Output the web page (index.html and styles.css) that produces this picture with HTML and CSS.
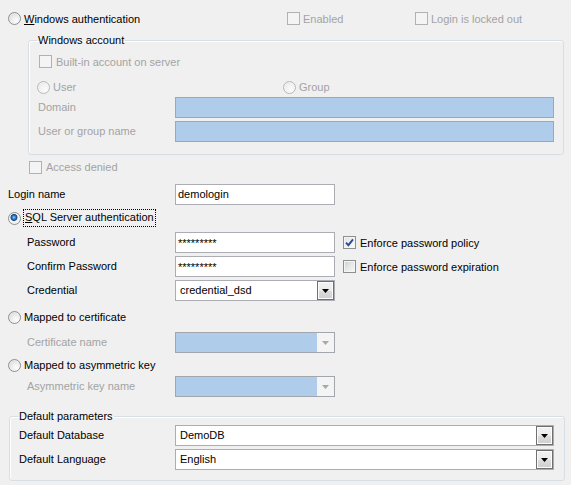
FILE: index.html
```html
<!DOCTYPE html>
<html lang="en">
<head>
<meta charset="utf-8">
<title>Login properties</title>
<link rel="stylesheet" href="styles.css">
</head>
<body>
<div class="page">
  <div class="top-row">
    <label class="opt"><span class="radio"></span><span><u>W</u>indows authentication</span></label>
    <label class="opt dis"><span class="cb dis"></span><span>Enabled</span></label>
    <label class="opt dis"><span class="cb dis"></span><span>Login is locked out</span></label>
  </div>

  <fieldset class="group winacc">
    <legend>Windows account</legend>
    <div class="builtin"><label class="opt dis cbopt"><span class="cb dis"></span><span>Built-in account on server</span></label></div>
    <div class="usergroup">
      <label class="opt dis"><span class="radio dis"></span><span>User</span></label>
      <label class="opt dis"><span class="radio dis"></span><span>Group</span></label>
    </div>
    <div class="frow first"><span class="lbl dis">Domain</span><span class="field blue"></span></div>
    <div class="frow"><span class="lbl dis">User or group name</span><span class="field blue"></span></div>
  </fieldset>

  <div class="access"><label class="opt dis cbopt"><span class="cb dis"></span><span>Access denied</span></label></div>

  <div class="frow login"><span class="lbl">Login name</span><span class="field"><span class="val">demologin</span></span></div>

  <div class="sqlrow">
    <label class="opt"><span class="radio on"></span><span class="focus"><u>S</u>QL Server authentication</span></label>
  </div>

  <div class="frow pw"><span class="lbl ind">Password</span><span class="field pwd">*********</span>
    <label class="opt cbopt check"><span class="cb on"><svg width="9" height="9" viewBox="0 0 9 9"><path d="M1 4.6 L3.4 7.2 L8 1.4" fill="none" stroke="#2a4b9b" stroke-width="1.9"/></svg></span><span>Enforce password policy</span></label>
  </div>
  <div class="frow"><span class="lbl ind">Confirm Password</span><span class="field pwd">*********</span>
    <label class="opt cbopt check"><span class="cb"></span><span>Enforce password expiration</span></label>
  </div>
  <div class="frow"><span class="lbl ind">Credential</span>
    <span class="field combo"><span class="val">credential_dsd</span><span class="btn"><svg width="7" height="4" viewBox="0 0 7 4"><path d="M0 0H7L3.5 4Z" fill="#000"/></svg></span></span>
  </div>

  <div class="maprow cert"><label class="opt"><span class="radio"></span><span>Mapped to certificate</span></label></div>
  <div class="frow sub"><span class="lbl ind dis">Certificate name</span>
    <span class="field combo blue"><span class="val"></span><span class="btn dis"><svg width="7" height="4" viewBox="0 0 7 4"><path d="M0 0H7L3.5 4Z" fill="#a8a8a8"/></svg></span></span>
  </div>
  <div class="maprow asym"><label class="opt"><span class="radio"></span><span>Mapped to asymmetric key</span></label></div>
  <div class="frow"><span class="lbl ind dis">Asymmetric key name</span>
    <span class="field combo blue"><span class="val"></span><span class="btn dis"><svg width="7" height="4" viewBox="0 0 7 4"><path d="M0 0H7L3.5 4Z" fill="#a8a8a8"/></svg></span></span>
  </div>

  <fieldset class="group params">
    <legend>Default parameters</legend>
    <div class="frow first"><span class="lbl">Default Database</span>
      <span class="field combo"><span class="val">DemoDB</span><span class="btn"><svg width="7" height="4" viewBox="0 0 7 4"><path d="M0 0H7L3.5 4Z" fill="#000"/></svg></span></span>
    </div>
    <div class="frow"><span class="lbl">Default Language</span>
      <span class="field combo"><span class="val">English</span><span class="btn"><svg width="7" height="4" viewBox="0 0 7 4"><path d="M0 0H7L3.5 4Z" fill="#000"/></svg></span></span>
    </div>
  </fieldset>
</div>
</body>
</html>
```

FILE: styles.css
```css
* { box-sizing: border-box; }
html, body { margin: 0; padding: 0; }
body {
  background: #f0f0f0;
  font: 11px/14px "Liberation Sans", Arial, sans-serif;
  color: #000;
  width: 571px;
  height: 485px;
  overflow: hidden;
}
.page { padding-left: 8px; }

u { text-decoration: underline; text-underline-offset: 1px; }

.opt { display: flex; align-items: center; gap: 3px; white-space: nowrap; }
.opt.cbopt { gap: 4px; }
.dis { color: #a3a3a3; }

/* radio buttons */
.radio {
  flex: none;
  width: 13px; height: 13px;
  border-radius: 50%;
  border: 1px solid #8e8f8f;
  background: radial-gradient(circle at 65% 70%, #fdfdfd 0, #ececec 45%, #cfd0d1 100%);
  box-shadow: inset 0 0 0 1px rgba(255,255,255,0.35);
}
.radio.dis {
  border-color: #b8b8b8;
  background: radial-gradient(circle at 65% 70%, #fbfbfb 0, #f1f1f1 50%, #e2e2e2 100%);
}
.radio.on {
  background: radial-gradient(circle at 45% 40%, #b7e2ff 0, #3d8ed6 1.3px, #1a5aa0 2.6px, #123f78 3.1px, #dfe6ee 3.8px, #f3f3f3 4.6px, #e5e5e5 100%);
}

/* checkboxes */
.cb {
  flex: none;
  width: 13px; height: 13px;
  border: 1px solid #8e8f8f;
  background: linear-gradient(135deg, #cbcfd5 0, #e8e9ea 55%, #f7f7f7 100%);
  box-shadow: inset 0 0 0 1px #f4f4f4;
  display: flex; align-items: center; justify-content: center;
}
.cb.dis {
  border-color: #b1b1b1;
  background: #f4f4f4;
  box-shadow: none;
}
.cb.on {
  background: linear-gradient(135deg, #dfe3e8 0, #f1f2f3 60%, #fbfbfb 100%);
}
.cb svg { display: block; }

/* top row */
.top-row {
  margin-top: 6px;
  height: 25px;
  display: grid;
  grid-template-columns: 279px 128px 1fr;
  align-items: center;
}

/* group boxes */
.group {
  margin: 0;
  padding: 0 0 0 9px;
  border: 1px solid #d5dfe5;
  border-radius: 3px;
  min-inline-size: 0;
  box-shadow: inset 1px 1px 0 #fff;
}
.group legend {
  padding: 0 1px;
  margin-left: -1px;
  line-height: 14px;
  height: 14px;
}
.winacc {
  margin: 2px 0 0 20px;
  width: 536px;
  padding-bottom: 12px;
}
.params {
  margin: 12px 0 0 1px;
  width: 556px;
  padding-bottom: 10px;
}

.builtin { margin-top: 7px; height: 15px; display: flex; align-items: center; padding-left: 1px; }
.usergroup {
  margin-top: 10px; height: 16px;
  display: grid; grid-template-columns: 246px 1fr;
  align-items: center;
  margin-left: -1px;
}

/* form rows */
.frow {
  display: grid;
  grid-template-columns: 167px 160px auto;
  align-items: center;
  height: 21px;
  margin-top: 3px;
}
.winacc .frow { grid-template-columns: 137px 379px; }
.winacc .frow.first { margin-top: 2px; }
.params .frow { grid-template-columns: 156px 379px; }
.params .frow.first { margin-top: 2px; }

.lbl { white-space: nowrap; padding-bottom: 2px; }
.lbl.ind { padding-left: 19px; }

.field {
  height: 21px;
  border: 1px solid #abadb3;
  background: #fff;
  padding: 0 2px;
  display: flex;
  align-items: center;
  white-space: nowrap;
}
.field .val { padding-bottom: 1px; }
.field.blue { background: #afcdea; border-color: #a3a6ab; }

.combo { padding: 0 0 0 4px; justify-content: space-between; }
.combo .val { flex: 1; }
.combo .btn {
  flex: none;
  width: 17px;
  height: 19px;
  border: 1px solid #707070;
  background: linear-gradient(#f2f2f2 0, #ebebeb 50%, #dddddd 51%, #cfcfcf 100%);
  box-shadow: inset 0 0 0 1px #fcfcfc;
  display: flex; align-items: center; justify-content: center;
}
.combo .btn.dis {
  border-color: #f4f4f4;
  background: #f4f4f4;
  box-shadow: none;
}
.combo .btn svg { display: block; }

.check { margin-left: 8px; }

.access { margin-top: 4px; height: 16px; display: flex; align-items: center; padding-left: 21px; }
.login { margin-top: 9px; }

.sqlrow { margin-top: 4px; height: 18px; display: flex; align-items: center; }
.focus {
  border: 1px dotted #000;
  height: 18px;
  padding: 0 1px;
  line-height: 15px;
  margin-left: -1px;
}

.frow.pw { margin-top: 5px; }

.maprow { height: 16px; display: flex; align-items: center; }
.maprow.cert { margin-top: 8px; }
.maprow.asym { margin-top: 4px; }
.frow.sub { margin-top: 7px; }
```
